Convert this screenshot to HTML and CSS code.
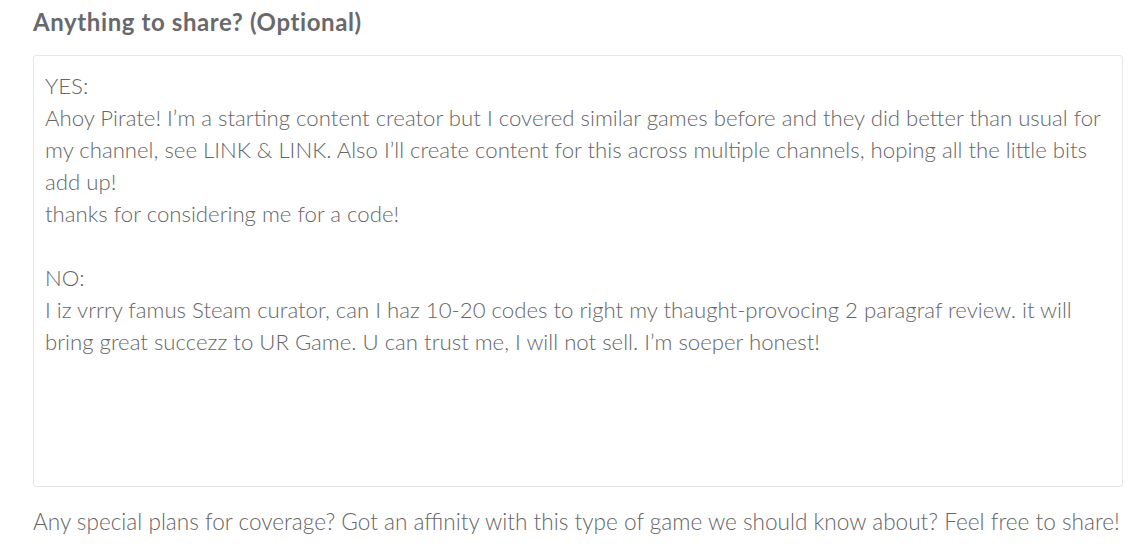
FILE: index.html
```html
<!DOCTYPE html>
<html lang="en">
<head>
<meta charset="utf-8">
<link rel="stylesheet" href="styles.css">
</head>
<body>
<div class="field">
  <label class="field-label" for="share">Anything to share? (Optional)</label>
  <textarea id="share" class="field-input" wrap="off">YES:
Ahoy Pirate! I’m a starting content creator but I covered similar games before and they did better than usual for
my channel, see LINK &amp; LINK. Also I’ll create content for this across multiple channels, hoping all the little bits
add up!
thanks for considering me for a code!

NO:
I iz vrrry famus Steam curator, can I haz 10-20 codes to right my thaught-provocing 2 paragraf review. it will
bring great succezz to UR Game. U can trust me, I will not sell. I’m soeper honest!</textarea>
  <p class="field-help">Any special plans for coverage? Got an affinity with this type of game we should know about? Feel free to share!</p>
</div>
</body>
</html>
```

FILE: styles.css
```css
html, body {
  margin: 0;
  background: #ffffff;
}
body {
  font-family: "Lato", "Open Sans", sans-serif;
  color: #6e6e6e;
}
.field {
  display: flex;
  flex-direction: column;
  padding: 6px 16px 0 33px;
}
.field-label {
  font-size: 24px;
  font-weight: 700;
  letter-spacing: 0.6px;
  color: #69696d;
  line-height: 32px;
  margin-bottom: 17px;
}
.field-input {
  box-sizing: border-box;
  height: 432px;
  width: 100%;
  margin: 0;
  padding: 14px 11px;
  border: 1px solid #e6e6e6;
  border-radius: 3px;
  font-family: inherit;
  font-size: 22.2px;
  font-weight: 300;
  line-height: 32px;
  color: #666666;
  white-space: pre;
  overflow: hidden;
  resize: none;
  background: #fff;
  outline: none;
}
.field-help {
  margin: 19px -16px 0 0;
  font-size: 22.6px;
  font-weight: 300;
  line-height: 32px;
  color: #666666;
  white-space: nowrap;
}
```
